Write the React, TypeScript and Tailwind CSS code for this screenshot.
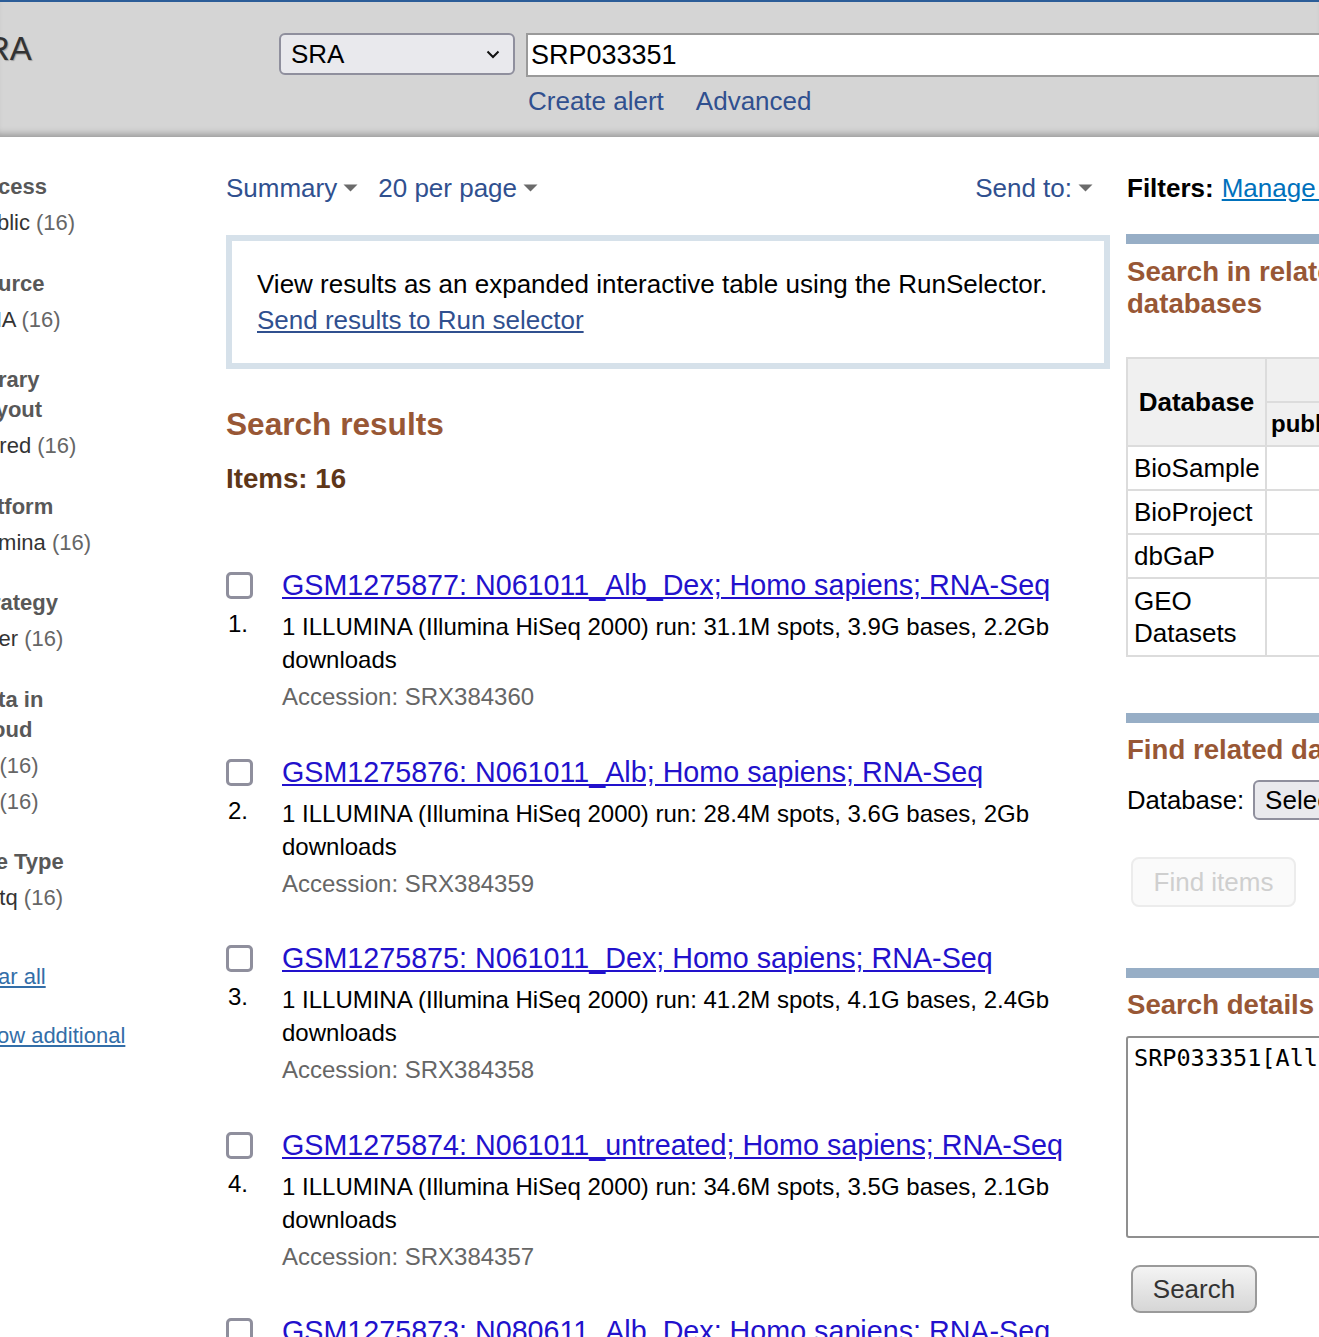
import React from "react";

const Tri = () => (
  <svg width="15" height="8" viewBox="0 0 15 8" className="inline-block ml-[6px] mb-[3px]">
    <path d="M0.5 0.5 L14.5 0.5 L7.5 7.5 Z" fill="#6b6b6b" />
  </svg>
);

const groups: { h: { t: string; c?: string }[]; items: { t: string; c?: string }[] }[] = [
  { h: [{ t: "Access" }], items: [{ t: "Public" }] },
  { h: [{ t: "Source" }], items: [{ t: "RNA" }] },
  { h: [{ t: "Library", c: "-ml-[5px]" }, { t: "Layout" }], items: [{ t: "paired" }] },
  { h: [{ t: "Platform", c: "-ml-[6px]" }], items: [{ t: "Illumina" }] },
  { h: [{ t: "Strategy" }], items: [{ t: "Other", c: "-ml-[7px]" }] },
  { h: [{ t: "Data in" }, { t: "Cloud" }], items: [{ t: "s3" }, { t: "gs" }] },
  { h: [{ t: "File Type" }], items: [{ t: "fastq" }] },
];

const results = [
  { id: "GSM1275877: N061011_Alb_Dex; Homo sapiens; RNA-Seq", desc: "1 ILLUMINA (Illumina HiSeq 2000) run: 31.1M spots, 3.9G bases, 2.2Gb downloads", acc: "SRX384360" },
  { id: "GSM1275876: N061011_Alb; Homo sapiens; RNA-Seq", desc: "1 ILLUMINA (Illumina HiSeq 2000) run: 28.4M spots, 3.6G bases, 2Gb downloads", acc: "SRX384359" },
  { id: "GSM1275875: N061011_Dex; Homo sapiens; RNA-Seq", desc: "1 ILLUMINA (Illumina HiSeq 2000) run: 41.2M spots, 4.1G bases, 2.4Gb downloads", acc: "SRX384358" },
  { id: "GSM1275874: N061011_untreated; Homo sapiens; RNA-Seq", desc: "1 ILLUMINA (Illumina HiSeq 2000) run: 34.6M spots, 3.5G bases, 2.1Gb downloads", acc: "SRX384357" },
  { id: "GSM1275873: N080611_Alb_Dex; Homo sapiens; RNA-Seq", desc: "1 ILLUMINA (Illumina HiSeq 2000) run: 30.2M spots, 3.4G bases, 2.0Gb downloads", acc: "SRX384356" },
];

const dbRows = ["BioSample", "BioProject", "dbGaP"];

export default function App() {
  return (
    <div className="w-[1319px] h-[1337px] overflow-hidden bg-white font-['Liberation_Sans',Arial,sans-serif] text-black">
      {/* Header */}
      <div className="h-[137px] bg-[#d5d5d5] border-t-2 border-[#2c5d98] shadow-[inset_0_-8px_7px_-5px_rgba(0,0,0,0.28)]">
        <div className="flex pt-[31px]">
          <div className="w-[279px] shrink-0">
            <div className="-ml-[36px] -mt-[2px] text-[33px] leading-[36px] text-[#333] [text-shadow:1px_1px_1px_rgba(0,0,0,0.25)]">SRA</div>
          </div>
          <div className="flex flex-col shrink-0">
            <div className="flex items-start">
              <div className="w-[236px] h-[42px] shrink-0 rounded-[6px] border-2 border-[#8f8f9d] bg-[#e9e9ed] flex items-center justify-between pl-[10px] pr-[13px]">
                <span className="text-[26px] leading-none">SRA</span>
                <svg width="14" height="9" viewBox="0 0 14 9">
                  <path d="M1.5 1.5 L7 7 L12.5 1.5" fill="none" stroke="#111" strokeWidth="2" />
                </svg>
              </div>
              <div className="ml-[11px] w-[900px] h-[44px] shrink-0 bg-white border-2 border-[#9a9a9a] flex items-center pl-[3px]">
                <span className="text-[27px] leading-none">SRP033351</span>
              </div>
            </div>
            <div className="flex gap-[32px] pl-[249px] mt-[8px] text-[26px] leading-[32px] text-[#30508f]">
              <span>Create alert</span>
              <span>Advanced</span>
            </div>
          </div>
        </div>
      </div>

      {/* Body */}
      <div className="flex">
        {/* Sidebar */}
        <div className="w-[226px] shrink-0 pt-[35px]">
          <div className="-ml-[30px] text-[22px]">
            {groups.map((g, gi) => (
              <div key={gi} className={gi === 0 ? "" : "mt-[27.5px]"}>
                {g.h.map((l) => (
                  <div key={l.t} className={`font-bold leading-[30px] text-[#585858] whitespace-nowrap ${l.c ?? ""}`}>{l.t}</div>
                ))}
                <div className="mt-[3px]">
                  {g.items.map((it) => (
                    <div key={it.t} className={`leading-[36px] text-[#333] whitespace-nowrap ${it.c ?? ""}`}>
                      {it.t} <span className="text-[#666]">(16)</span>
                    </div>
                  ))}
                </div>
              </div>
            ))}
            <div className="mt-[43px] -ml-[5px] leading-[36px] text-[#336ea8] underline whitespace-nowrap">Clear all</div>
            <div className="mt-[23px] leading-[36px] text-[#336ea8] underline whitespace-nowrap">Show additional</div>
          </div>
        </div>

        {/* Main */}
        <div className="w-[884px] shrink-0 pt-[33px]">
          <div className="flex items-center h-[36px] text-[26px] text-[#30508f]">
            <span>Summary<Tri /></span>
            <span className="ml-[20px]">20 per page<Tri /></span>
            <span className="ml-auto mr-[17px]">Send to:<Tri /></span>
          </div>

          <div className="mt-[29px] border-[6px] border-[#d6e1ea] px-[25px] py-[25px] text-[26px] leading-[36px]">
            <div>View results as an expanded interactive table using the RunSelector.</div>
            <div className="text-[#30508f] underline">Send results to Run selector</div>
          </div>

          <div className="mt-[35px] text-[31.6px] leading-[40px] font-bold text-[#985735]">Search results</div>
          <div className="mt-[17px] text-[27.7px] leading-[36px] font-bold text-[#5e3618]">Items: 16</div>

          <div className="mt-[70px]">
            {results.map((r, i) => (
              <div key={r.acc} className="flex mb-[40.5px]">
                <div className="w-[56px] shrink-0">
                  <div className="mt-[5px] w-[27px] h-[27px] border-[3px] border-[#8f8f9d] rounded-[5px]" />
                  <div className="mt-[8px] ml-[2px] text-[24px] leading-[33px]">{i + 1}.</div>
                </div>
                <div className="flex-1 pr-[20px]">
                  <div className="text-[28.7px] leading-[36px] text-[#2211cc] underline whitespace-nowrap">{r.id}</div>
                  <div className="mt-[7px] text-[24px] leading-[33px]">{r.desc}</div>
                  <div className="mt-[4px] text-[24px] leading-[33px] text-[#666]">Accession: {r.acc}</div>
                </div>
              </div>
            ))}
          </div>
        </div>

        {/* Right column */}
        <div className="ml-[16px] w-[300px] shrink-0 pt-[33px]">
          <div className="h-[36px] flex items-center text-[26px] whitespace-nowrap pl-[1px]">
            <span className="font-bold">Filters:</span>
            <span className="ml-[8px] text-[#0071bc] underline">Manage Filters</span>
          </div>

          <div className="mt-[28px] h-[10px] w-[400px] bg-[#97aec6]" />
          <div className="mt-[12px] pl-[1px] text-[27.6px] leading-[32px] font-bold text-[#985735]">Search in related databases</div>

          <table className="mt-[37px] border-collapse w-[420px] text-[26px]">
            <thead>
              <tr className="bg-[#f0f0f0]">
                <th rowSpan={2} className="border-2 border-[#dcdcdc] w-[139px] font-bold text-center">Database</th>
                <th className="border-2 border-[#dcdcdc] h-[44px]" />
              </tr>
              <tr className="bg-[#f0f0f0]">
                <th className="border-2 border-[#dcdcdc] h-[44px] text-left pl-[4px] text-[24px] font-bold">public</th>
              </tr>
            </thead>
            <tbody>
              {dbRows.map((d) => (
                <tr key={d}>
                  <td className="border-2 border-[#dcdcdc] h-[44px] pl-[6px] leading-[32px]">{d}</td>
                  <td className="border-2 border-[#dcdcdc]" />
                </tr>
              ))}
              <tr>
                <td className="border-2 border-[#dcdcdc] h-[78px] pl-[6px] leading-[32px]">GEO<br />Datasets</td>
                <td className="border-2 border-[#dcdcdc]" />
              </tr>
            </tbody>
          </table>

          <div className="mt-[56px] h-[10px] w-[400px] bg-[#97aec6]" />
          <div className="mt-[11px] pl-[1px] text-[27.6px] leading-[32px] font-bold text-[#985735] whitespace-nowrap">Find related data</div>
          <div className="mt-[14px] flex items-center pl-[1px]">
            <span className="text-[25.7px]">Database:</span>
            <div className="ml-[9px] w-[200px] h-[40px] rounded-[6px] border-2 border-[#8f8f9d] bg-[#e9e9ed] flex items-center pl-[10px] text-[26px]">Select</div>
          </div>
          <div className="mt-[37px] ml-[5px] w-[165px] h-[50px] rounded-[8px] border-2 border-[#ececec] bg-[#fafafa] flex items-center justify-center text-[26px] text-[#cfcfcf]">Find items</div>

          <div className="mt-[61px] h-[10px] w-[400px] bg-[#97aec6]" />
          <div className="mt-[11px] pl-[1px] text-[27.6px] leading-[32px] font-bold text-[#985735] whitespace-nowrap">Search details</div>
          <div className="mt-[15px] w-[360px] h-[202px] border-2 border-[#8f8f8f] rounded-[3px] pl-[6px] pt-[4px] font-['DejaVu_Sans_Mono',monospace] text-[23.5px] leading-[32px] whitespace-nowrap overflow-hidden">SRP033351[All Fields]</div>
          <div className="mt-[27px] ml-[5px] w-[126px] h-[48px] rounded-[9px] border-2 border-[#9a9a9a] bg-gradient-to-b from-[#f4f4f4] to-[#d6d6d6] flex items-center justify-center text-[26px] text-[#333]">Search</div>
        </div>
      </div>
    </div>
  );
}
